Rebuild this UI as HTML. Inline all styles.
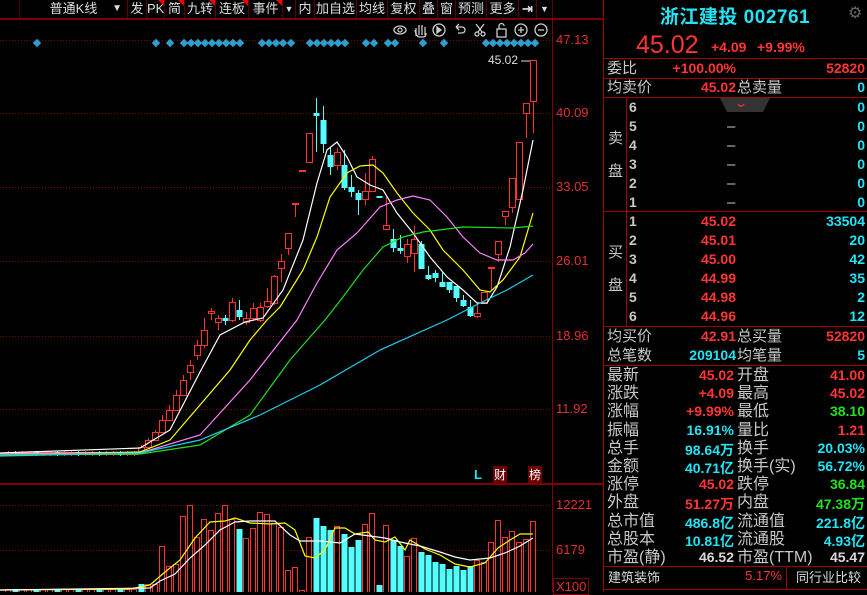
<!DOCTYPE html>
<html><head><meta charset="utf-8"><style>
*{margin:0;padding:0;box-sizing:border-box}
body{width:867px;height:592px;background:#000;overflow:hidden;position:relative;font-family:"Liberation Sans","Noto Sans CJK SC",sans-serif;color:#c8c8c8}
.tb{position:absolute;top:0;height:18px;font-size:13px;color:#ddd;line-height:18px;text-align:center;border-right:1px solid #5a0000;background:#000}
.tri{position:absolute;right:0;top:0;width:0;height:0;border-top:6px solid #e00;border-left:6px solid transparent}
.p{position:absolute;left:603px;width:264px;border-left:1px solid #a00000}
.hl{position:absolute;left:603px;width:264px;height:1px;background:#a00000}
.r{position:absolute;height:19px;line-height:19px;font-size:15px;white-space:nowrap}
.n{font-weight:bold;font-size:14px;position:absolute;text-align:right;white-space:nowrap}
.red{color:#ff3535}.cy{color:#22e4f4}.gr{color:#22e022}.wh{color:#d8d8d8}
.ax{position:absolute;left:556px;font-size:13px;color:#e03030}
</style></head><body>
<svg id="c" width="603" height="592" style="position:absolute;left:0;top:0"></svg>

<div class="tb" style="left:0;width:20px;border-right:1px solid #5a0000"></div>
<div class="tb" style="left:20px;width:108px">普通K线<span style="position:absolute;right:5px;font-size:10px">▼</span></div>
<div class="tb" style="left:128px;width:19px">发</div>
<div class="tb" style="left:147px;width:18px">PK<i class="tri"></i></div>
<div class="tb" style="left:165px;width:20px">简<i class="tri"></i></div>
<div class="tb" style="left:185px;width:31px">九转<i class="tri"></i></div>
<div class="tb" style="left:216px;width:33px">连板<i class="tri"></i></div>
<div class="tb" style="left:249px;width:34px">事件<i class="tri"></i></div>
<div class="tb" style="left:283px;width:13px;font-size:9px">▼</div>
<div class="tb" style="left:296px;width:19px">内</div>
<div class="tb" style="left:315px;width:42px">加自选</div>
<div class="tb" style="left:357px;width:31px">均线</div>
<div class="tb" style="left:388px;width:32px">复权</div>
<div class="tb" style="left:420px;width:18px">叠</div>
<div class="tb" style="left:438px;width:18px">窗</div>
<div class="tb" style="left:456px;width:31px">预测</div>
<div class="tb" style="left:487px;width:32px">更多</div>
<div class="tb" style="left:519px;width:18px;font-weight:bold">⇥</div>
<div class="tb" style="left:537px;width:16px;font-size:9px">▼</div>
<div style="position:absolute;left:0;top:18px;width:603px;height:2px;background:#800000"></div>

<div class="ax" style="top:32px">47.13</div>
<div class="ax" style="top:105px">40.09</div>
<div class="ax" style="top:179px">33.05</div>
<div class="ax" style="top:253px">26.01</div>
<div class="ax" style="top:328px">18.96</div>
<div class="ax" style="top:401px">11.92</div>
<div class="ax" style="top:497px">12221</div>
<div class="ax" style="top:542px">6179</div>
<div class="ax" style="top:578px;border:1px solid #800000;padding:0 2px;left:553px">X100</div>
<div style="position:absolute;left:488px;top:53px;font-size:12px;color:#ddd">45.02</div>
<div style="position:absolute;left:474px;top:467px;font-size:13px;color:#22e4f4;font-weight:bold">L</div>
<div style="position:absolute;left:493px;top:466px;font-size:12px;color:#fff;background:#6a0000;padding:0 1px">财</div>
<div style="position:absolute;left:528px;top:466px;font-size:12px;color:#fff;background:#6a0000;padding:0 1px">榜</div>

<!-- right panel -->
<div class="p" style="top:0;height:592px"></div>
<div style="position:absolute;left:603px;width:264px;top:2px;text-align:center;font-size:19px;font-weight:bold;color:#22e4f4;letter-spacing:0.5px">浙江建投 002761</div>
<div style="position:absolute;left:848px;top:3px;color:#666;font-size:16px">⚙</div>
<div style="position:absolute;left:636px;top:31px;font-size:25px;color:#ff3535">45.02</div>
<div style="position:absolute;left:711px;top:39px;font-size:14px;font-weight:bold;color:#ff3535">+4.09</div>
<div style="position:absolute;left:757px;top:39px;font-size:14px;font-weight:bold;color:#ff3535">+9.99%</div>

<div class="hl" style="top:58px"></div>
<div class="r" style="left:607px;top:59px">委比</div><div class="n red" style="top:60px;left:650px;width:86px">+100.00%</div><div class="n red" style="top:60px;left:780px;width:85px">52820</div>
<div class="hl" style="top:78px"></div>
<div class="r" style="left:607px;top:78px">均卖价</div><div class="n red" style="top:79px;left:650px;width:86px">45.02</div><div class="r" style="left:737px;top:78px">总卖量</div><div class="n cy" style="top:79px;left:780px;width:85px">0</div>
<div class="hl" style="top:97px"></div>
<div style="position:absolute;left:626px;top:97px;width:1px;height:229px;background:#a00000"></div>
<div style="position:absolute;left:720px;top:98px;width:50px;height:14px;background:#333;clip-path:polygon(0 0,100% 0,86% 100%,14% 100%)"></div>
<div style="position:absolute;left:736px;top:96px;color:#ff3535;font-size:12px;transform:scaleX(1.4)">⌄</div>
<div class="r" style="left:608px;top:129px">卖</div><div class="r" style="left:608px;top:162px">盘</div>
<div class="r" style="left:608px;top:243px">买</div><div class="r" style="left:608px;top:276px">盘</div>
<div class="hl" style="top:211px"></div>
<div class="hl" style="top:326px"></div>

<div id="ob"></div>

<div class="r" style="left:607px;top:327px">均买价</div><div class="n red" style="top:328px;left:650px;width:86px">42.91</div><div class="r" style="left:737px;top:327px">总买量</div><div class="n red" style="top:328px;left:780px;width:85px">52820</div>
<div class="r" style="left:607px;top:346px">总笔数</div><div class="n cy" style="top:347px;left:650px;width:86px">209104</div><div class="r" style="left:737px;top:346px">均笔量</div><div class="n cy" style="top:347px;left:780px;width:85px">5</div>
<div class="hl" style="top:365px"></div>
<div id="st"></div>
<div class="hl" style="top:566px"></div>
<div class="hl" style="top:589px"></div>
<div class="r" style="left:608px;top:568px;font-size:13px;color:#ddd">建筑装饰</div>
<div class="n red" style="left:700px;width:82px;top:568px;font-weight:normal;font-size:13px">5.17%</div>
<div style="position:absolute;left:786px;top:567px;width:1px;height:22px;background:#a00000"></div>
<div class="r" style="left:796px;top:568px;font-size:13px;color:#ddd">同行业比较</div>

<script>
var ns="http://www.w3.org/2000/svg",svg=document.getElementById('c');
function el(t,a){var e=document.createElementNS(ns,t);for(var k in a)e.setAttribute(k,a[k]);svg.appendChild(e);return e;}
// grid
[40,113,187,261,336,409,505,550].forEach(function(y){el('line',{x1:0,x2:552,y1:y+.5,y2:y+.5,stroke:'#7a0000','stroke-dasharray':'1,2'});});
el('line',{x1:552.5,x2:552.5,y1:20,y2:592,stroke:'#800000'});
el('rect',{x:0,y:483,width:603,height:2,fill:'#800000'});
// diamonds
var dx=[37,156,170,262,269,276,283,291,310,317,324,331,338,345,366,374,388,395,423,444];
for(var x=184;x<=242;x+=7)dx.push(x);
for(var x=486;x<=535;x+=7)dx.push(x);
dx.forEach(function(x){el('rect',{x:x-3,y:40,width:6,height:6,fill:'#2a9fd0',transform:'rotate(45 '+x+' 43)'});});
// icons
var ic='stroke="#ccc" fill="none" stroke-width="1.3"';
svg.insertAdjacentHTML('beforeend',
'<g '+ic+'><ellipse cx="400" cy="30" rx="6" ry="4"/><circle cx="400" cy="30" r="2"/>'+
'<path d="M416 36 v-8 M419 35 v-10 M422 35 v-10 M425 35 v-8 M415 30 q1 7 5 7 h3 q3 0 3-4"/>'+
'<circle cx="439" cy="30" r="6"/><path d="M437 27 l4 3 -4 3z" fill="#ccc"/>'+
'<path d="M456 27 h6 a3 3 0 0 1 0 6 h-4 M456 27 l3-3 M456 27 l3 3"/>'+
'<circle cx="477" cy="34" r="2"/><circle cx="483" cy="34" r="2"/><path d="M478 32 l6-8 M482 32 l-6-8"/>'+
'<rect x="497" y="29" width="9" height="8"/><path d="M499 29 v-3 a2.5 2.5 0 0 1 5 0"/>'+
'<circle cx="521" cy="30" r="6"/><path d="M518 30 h6 M521 27 v6"/>'+
'<circle cx="541" cy="30" r="6"/><path d="M538 30 h6"/></g>');
el('line',{x1:521,x2:531,y1:61,y2:61,stroke:'#ddd'});
// candles
var C=[[311,313,308,320,'r'],[318,322,315,330,'r'],[318,320,315,325,'c'],[302,320,298,322,'r'],[310,316,300,320,'c'],[318,322,312,325,'r'],[308,318,303,320,'r'],[307,320,303,322,'r'],[301,306,288,308,'r'],[276,303,275,305,'r'],[261,268,254,282,'r'],[233,248,233,255,'r'],[203,204,203,217,'r'],[170,171,170,171,'r'],[133,162,133,162,'r'],[113,115,98,152,'c'],[120,143,106,153,'c'],[155,166,147,175,'c'],[152,165,148,170,'r'],[165,187,150,190,'c'],[187,191,175,197,'c'],[193,199,190,215,'c'],[191,199,173,205,'r'],[159,191,156,191,'r'],[196,197,196,197,'c'],[225,229,197,229,'r'],[239,247,229,252,'c'],[248,250,235,254,'c'],[244,256,239,263,'r'],[239,253,226,272,'r'],[244,268,241,268,'c'],[275,278,266,280,'c'],[273,277,270,282,'c'],[282,286,272,286,'c'],[282,289,282,293,'c'],[286,297,286,302,'c'],[300,305,295,307,'c'],[307,315,300,317,'c'],[313,316,302,318,'r'],[292,303,292,303,'r'],[267,268,267,290,'r'],[241,254,241,262,'r'],[211,216,211,225,'r'],[178,207,178,213,'r'],[142,199,142,199,'r'],[103,113,103,138,'r'],[60,101,60,133,'r']];
var pre=[[447,451,445,452,'r'],[440,447,438,448,'r'],[432,440,430,441,'r'],[420,432,415,433,'r'],[410,420,405,421,'r'],[395,410,390,411,'r'],[380,395,375,396,'r'],[365,372,360,380,'r'],[345,355,340,360,'r'],[330,345,318,348,'r']];
var all=[];for(var i=0;i<19;i++)all.push([452,454,451,456,i%3==1?'c':'r']);
all=all.concat(pre,C);
all.forEach(function(d,i){var x=8+7*i,col=d[4]=='r'?'#ff3232':'#54ffff';
 el('line',{x1:x+.5,x2:x+.5,y1:d[2],y2:d[3],stroke:col});
 var h=Math.max(1,d[1]-d[0]);
 if(d[4]=='r')el('rect',{x:x-2.5,y:d[0]+.5,width:6,height:h,fill:'#000',stroke:col});
 else el('rect',{x:x-2.5,y:d[0],width:6,height:h+1,fill:col});});
// MAs
function pl(p,c){el('polyline',{points:p,fill:'none',stroke:c,'stroke-width':1.2});}
pl('0,453 140,448 170,430 200,372 220,335 245,322 263,318 283,290 303,240 317,183 327,150 337,142 347,157 357,177 370,185 383,190 397,213 413,233 430,257 447,277 463,290 477,303 487,303 497,287 510,247 523,190 533,140','#fff');
pl('0,454 140,452 170,440 200,405 230,370 250,340 267,320 280,307 303,270 317,237 330,197 347,173 360,166 373,165 383,173 397,193 413,213 430,230 443,250 463,270 480,290 490,292 503,280 520,257 533,213','#ffff00');
pl('0,454 140,453 200,435 250,380 297,320 317,283 337,250 357,233 380,207 397,200 413,196 430,200 447,217 463,237 480,253 497,260 513,260 525,253 533,244','#ff80ff');
pl('0,455 140,454 200,445 250,415 290,360 325,320 343,297 363,270 383,247 403,237 423,232 463,227 513,228 533,226','#22dd22');
pl('0,456 140,453 200,440 260,415 320,385 380,350 447,320 480,303 507,290 533,275','#22ccee');
// volume
var V=[[546,'r'],[566,'r'],[564,'r'],[516,'r'],[505,'r'],[537,'r'],[519,'r'],[530,'r'],[513,'r'],[505,'r'],[519,'r'],[529,'c'],[538,'r'],[528,'r'],[512,'r'],[514,'r'],[523,'r'],[527,'r'],[570,'r'],[567,'r'],[590,'r'],[537,'r'],[518,'c'],[526,'c'],[530,'c'],[526,'r'],[534,'c'],[547,'c'],[540,'c'],[524,'r'],[513,'r'],[585,'c'],[525,'r'],[540,'c'],[546,'c'],[556,'r'],[538,'r'],[552,'c'],[555,'c'],[562,'c'],[564,'c'],[569,'c'],[566,'c'],[570,'c'],[566,'c'],[560,'r'],[562,'r'],[542,'r'],[520,'r'],[537,'r'],[531,'r'],[542,'r'],[539,'r'],[521,'r']];
var vv=[];for(var i=0;i<22;i++)vv.push([i>18?584:589,i%3==1?'c':'r']);vv=vv.concat(V);
vv.forEach(function(d,i){var x=8+7*i,col=d[1]=='r'?'#ff3232':'#54ffff';
 if(d[1]=='r')el('rect',{x:x-2.5,y:d[0]+.5,width:5,height:592-d[0],fill:'none',stroke:col});
 else el('rect',{x:x-2.5,y:d[0],width:6,height:592-d[0],fill:col});});
pl('0,590 130,589 150,585 165,572 180,560 195,538 210,522 225,521 235,518 250,523 270,524 285,523 295,530 305,556 315,558 325,550 335,528 345,528 355,534 368,532 375,540 385,542 395,537 405,550 410,540 425,549 440,555 455,564 470,567 485,563 498,548 510,540 520,534 533,534','#ffff00');
pl('0,590 150,588 160,581 175,574 190,558 205,545 220,530 235,522 250,521 275,521 290,535 300,541 320,541 340,543 355,534 370,536 385,538 400,542 420,546 440,552 455,557 470,560 490,558 505,553 520,546 533,538','#fff');
// order book
var ob='';
for(var k=0;k<6;k++){var y=98+k*19;ob+='<div class="r" style="left:629px;top:'+y+'px;font-weight:bold;font-size:14px">'+(6-k)+'</div>'+(k>0?'<div class="r" style="left:727px;top:'+y+'px">–</div>':'')+'<div class="n cy" style="top:'+(y+1)+'px;left:780px;width:85px">0</div>';}
var B=[['45.02','33504'],['45.01','20'],['45.00','42'],['44.99','35'],['44.98','2'],['44.96','12']];
B.forEach(function(b,k){var y=212+k*19;ob+='<div class="r" style="left:629px;top:'+y+'px;font-weight:bold;font-size:14px">'+(k+1)+'</div><div class="n red" style="top:'+(y+1)+'px;left:650px;width:86px">'+b[0]+'</div><div class="n cy" style="top:'+(y+1)+'px;left:780px;width:85px">'+b[1]+'</div>';});
document.getElementById('ob').outerHTML=ob;
var S=[['最新','45.02','red','开盘','41.00','red'],['涨跌','+4.09','red','最高','45.02','red'],['涨幅','+9.99%','red','最低','38.10','gr'],['振幅','16.91%','cy','量比','1.21','red'],['总手','98.64万','cy','换手','20.03%','cy'],['金额','40.71亿','cy','换手(实)','56.72%','cy'],['涨停','45.02','red','跌停','36.84','gr'],['外盘','51.27万','red','内盘','47.38万','gr'],['总市值','486.8亿','cy','流通值','221.8亿','cy'],['总股本','10.81亿','cy','流通股','4.93亿','cy'],['市盈(静)','46.52','wh','市盈(TTM)','45.47','wh']];
var st='';S.forEach(function(s,k){var y=366+k*18.2;st+='<div class="r" style="left:607px;top:'+y+'px;font-size:16px">'+s[0]+'</div><div class="n '+s[2]+'" style="top:'+(y+1)+'px;left:640px;width:94px;font-size:14px">'+s[1]+'</div><div class="r" style="left:737px;top:'+y+'px;font-size:16px">'+s[3]+'</div><div class="n '+s[5]+'" style="top:'+(y+1)+'px;left:780px;width:85px;font-size:14px">'+s[4]+'</div>';});
document.getElementById('st').outerHTML=st;
</script>
</body></html>
